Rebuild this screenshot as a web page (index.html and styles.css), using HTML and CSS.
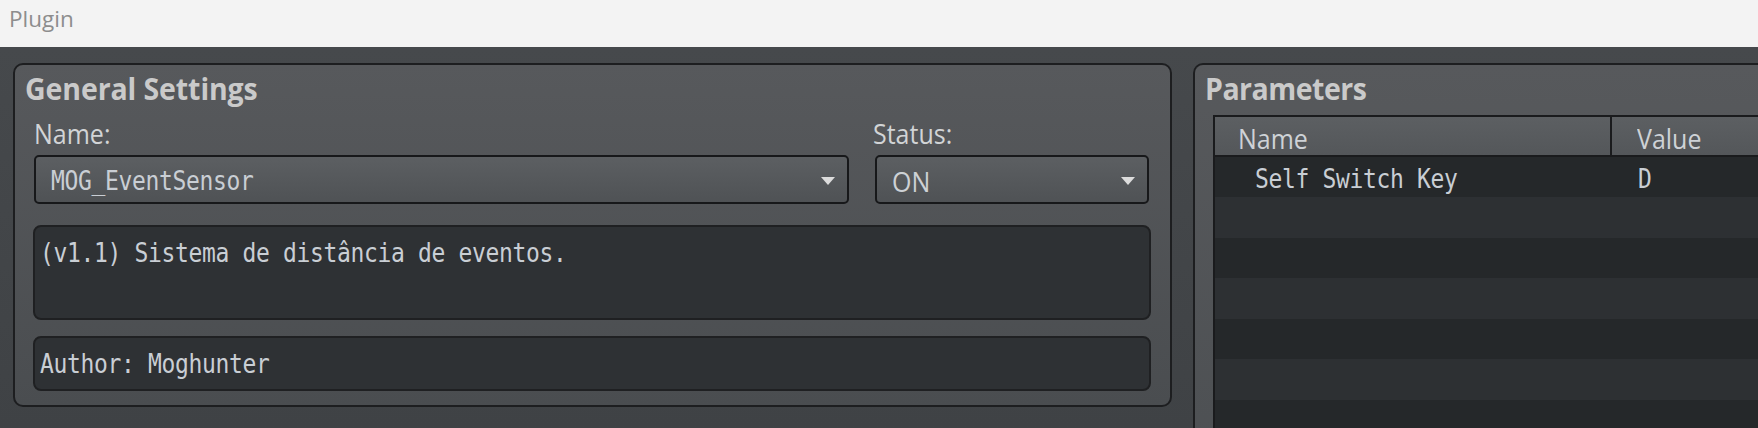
FILE: index.html
```html
<!DOCTYPE html>
<html lang="en">
<head>
<meta charset="utf-8">
<title>Plugin</title>
<link rel="stylesheet" href="styles.css">
</head>
<body>
<div class="titlebar">Plugin</div>
<main class="workspace">
  <section class="panel general">
    <h2 class="panel-title">General Settings</h2>
    <div class="fields">
      <div class="field field-name">
        <div class="label">Name:</div>
        <div class="combo"><span class="mono">MOG_EventSensor</span><span class="arrow"></span></div>
      </div>
      <div class="field field-status">
        <div class="label">Status:</div>
        <div class="combo"><span class="combo-text">ON</span><span class="arrow"></span></div>
      </div>
    </div>
    <div class="textbox desc"><span class="mono">(v1.1) Sistema de distância de eventos.</span></div>
    <div class="textbox author"><span class="mono">Author: Moghunter</span></div>
  </section>
  <section class="panel params">
    <h2 class="panel-title">Parameters</h2>
    <div class="table">
      <div class="thead">
        <div class="cell col-name th"><span class="th-text">Name</span></div>
        <div class="cell col-value th"><span class="th-text">Value</span></div>
      </div>
      <div class="row"><div class="cell col-name"><span class="mono">Self Switch Key</span></div><div class="cell col-value"><span class="mono">D</span></div></div>
      <div class="row alt"></div>
      <div class="row"></div>
      <div class="row alt"></div>
      <div class="row"></div>
      <div class="row alt"></div>
      <div class="row"></div>
    </div>
  </section>
</main>
</body>
</html>
```
FILE: styles.css
```css
* { box-sizing: border-box; }
html, body {
  margin: 0;
  padding: 0;
  width: 1758px;
  height: 428px;
  overflow: hidden;
}
body {
  font-family: "Open Sans", "Noto Sans", sans-serif;
  background: #f3f3f3;
}
.titlebar {
  height: 47px;
  background: #f3f3f3;
  color: #8d8d8d;
  font-size: 22.5px;
  line-height: 30px;
  padding: 4px 0 0 9px;
}
.workspace {
  height: 381px;
  background: linear-gradient(#46494c, #3f4245);
  display: flex;
  align-items: flex-start;
  gap: 21px;
  padding: 16px 0 0 13px;
  overflow: hidden;
}
.panel {
  border: 2px solid #1d1e20;
  border-radius: 10px;
  background: linear-gradient(#57595c, #4a4d50);
  flex: none;
}
.general {
  width: 1159px;
  height: 344px;
  padding: 7px 19px 14px 18px;
}
.params {
  width: 700px;
  height: 400px;
  padding: 7px 0 0 18px;
  border-right: none;
  background: linear-gradient(#57595c, #4d5053);
}
.panel-title {
  margin: 0 0 0 -8px;
  font-size: 28.5px;
  line-height: 34px;
  font-weight: 700;
  color: #cacaca;
  letter-spacing: -0.1px;
  transform: scaleY(1.05);
  transform-origin: 0 60%;
}
.params .panel-title { letter-spacing: -0.5px; }
.fields {
  display: flex;
  gap: 26px;
  margin-top: 13px;
}
.field-name { width: 816px; padding-left: 1px; }
.field-status { width: 274px; }
.field-status .label { margin-left: -2px; }
.label {
  font-size: 25px;
  line-height: 30px;
  color: #d2d4d6;
  height: 36px;
  transform: scaleY(1.06);
  transform-origin: 0 60%;
}
.combo {
  height: 49px;
  border: 2px solid #17181a;
  border-radius: 5px;
  background: linear-gradient(#5c5f62, #4f5255);
  display: flex;
  align-items: center;
  justify-content: space-between;
  padding: 0 12px 0 15px;
  color: #ccd0d4;
}
.combo-text {
  font-size: 25px;
  line-height: 30px;
  color: #cdd1d5;
  display: inline-block;
  transform: scaleY(1.12);
  margin-top: 3px;
}
.arrow {
  width: 0;
  height: 0;
  border-left: 7px solid transparent;
  border-right: 7px solid transparent;
  border-top: 8px solid #dcdcdc;
  margin-top: 2px;
}
.mono {
  display: inline-block;
  font-family: "DejaVu Sans Mono", "Liberation Mono", monospace;
  font-size: 23px;
  line-height: 30px;
  letter-spacing: -0.35px;
  color: #c9ced4;
  transform: scaleY(1.18);
  transform-origin: 0 50%;
}
.combo .mono { margin-top: 3px; }
.textbox {
  background: #2e3134;
  border: 2px solid #1f2022;
  border-radius: 8px;
  padding: 0 0 0 5px;
}
.desc {
  height: 95px;
  margin-top: 21px;
  padding-top: 11px;
}
.author {
  height: 55px;
  margin-top: 16px;
  display: flex;
  align-items: center;
}
.table {
  margin-top: 9px;
  border-left: 2px solid #1a1b1d;
  border-top: 2px solid #1a1b1d;
  background: #25282a;
}
.thead {
  display: flex;
  height: 40px;
  border-bottom: 2px solid #1a1b1d;
  background: linear-gradient(#5c5f62, #54575a);
}
.row {
  display: flex;
  height: 40px;
  align-items: center;
  background: #25282a;
}
.row:nth-child(3),
.row:nth-child(5),
.row:nth-child(7) { height: 41px; }
.row.alt { background: #2d3033; }
.cell { display: flex; align-items: center; height: 100%; }
.col-name { width: 397px; }
.col-value { flex: 1; }
.th-text {
  display: inline-block;
  font-size: 25px;
  line-height: 30px;
  color: #ced2d6;
  transform: scaleY(1.1);
  margin-top: 3px;
}
.thead .col-name {
  border-right: 2px solid #1a1b1d;
  padding-left: 23px;
}
.thead .col-value { padding-left: 25px; }
.row .col-name { padding-left: 40px; }
.row .col-value { padding-left: 26px; }
.row .mono { margin-top: 4px; }
```
